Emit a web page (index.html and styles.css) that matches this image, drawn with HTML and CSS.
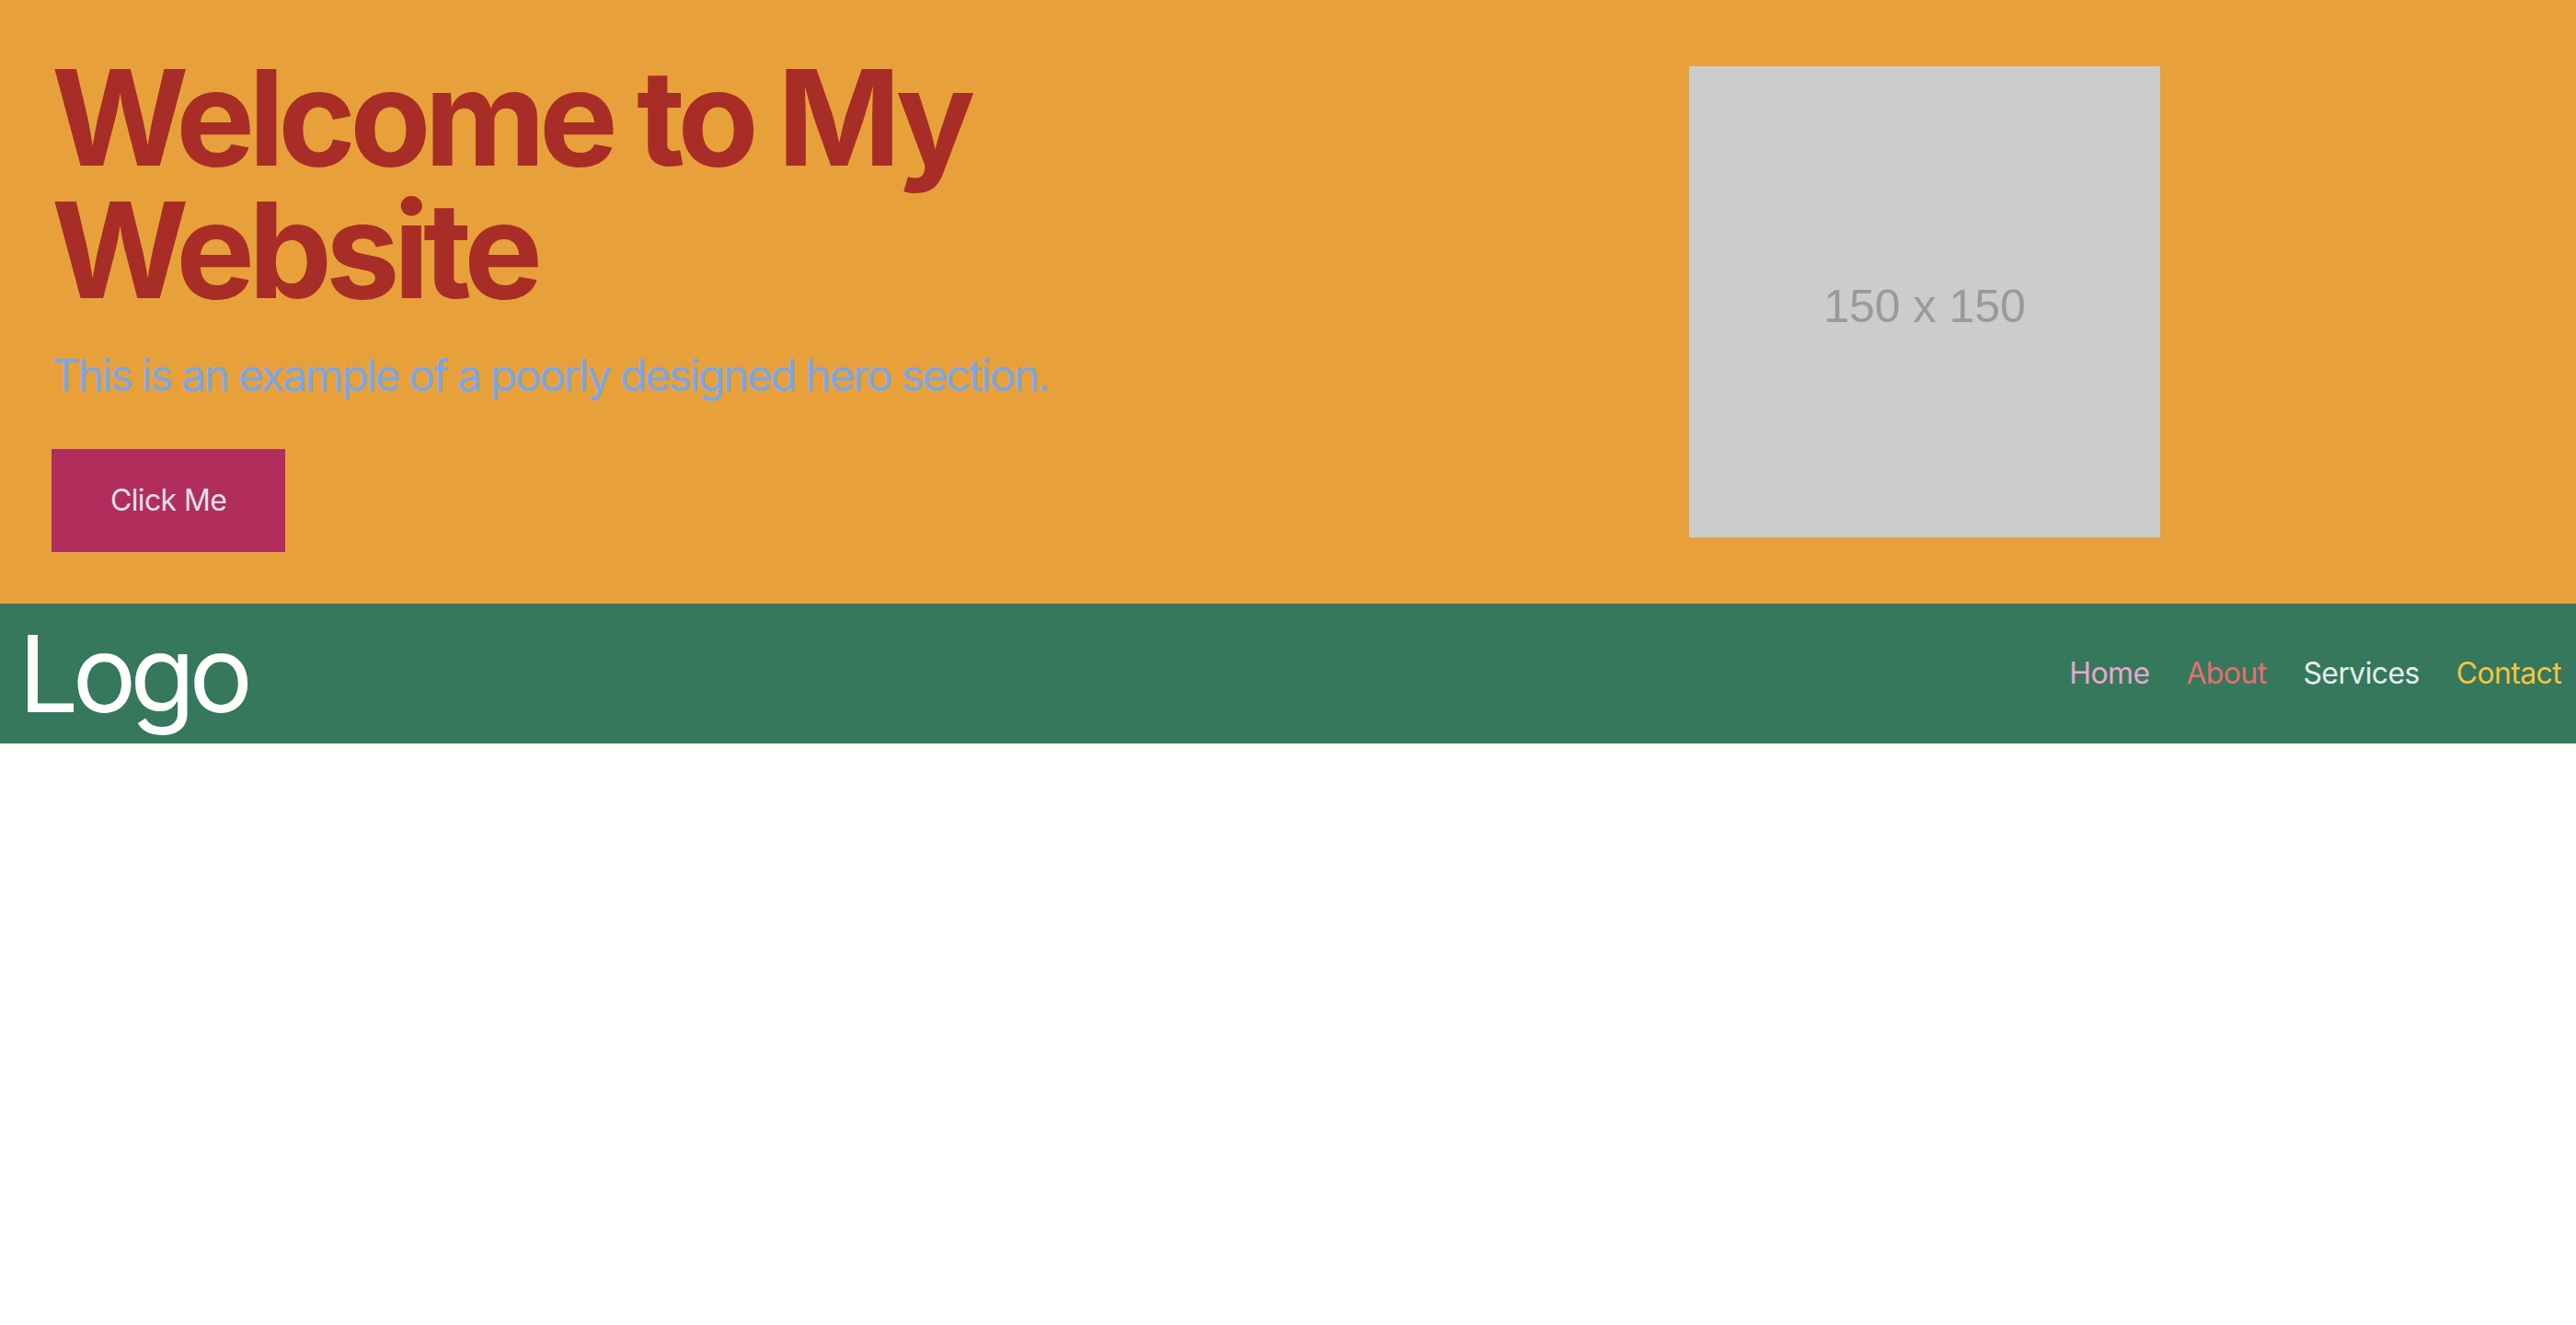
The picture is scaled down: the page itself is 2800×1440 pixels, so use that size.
FILE: index.html
```html
<!DOCTYPE html>
<html lang="en">
<head>
<meta charset="utf-8">
<title>Welcome to My Website</title>
<link rel="stylesheet" href="styles.css">
</head>
<body>
<section class="hero">
  <div class="hero-text">
    <h1 class="hero-title">Welcome to My<br>Website</h1>
    <p class="hero-sub">This is an example of a poorly designed hero section.</p>
    <button class="hero-btn">Click Me</button>
  </div>
  <div class="hero-media">
    <div class="placeholder"><span>150 x 150</span></div>
  </div>
</section>
<nav class="nav">
  <div class="logo">Logo</div>
  <ul class="links">
    <li><a class="link home" href="#">Home</a></li>
    <li><a class="link about" href="#">About</a></li>
    <li><a class="link services" href="#">Services</a></li>
    <li><a class="link contact" href="#">Contact</a></li>
  </ul>
</nav>
</body>
</html>
```

FILE: styles.css
```css
* { box-sizing: border-box; }
html, body { margin: 0; padding: 0; background: #ffffff; }
body { font-family: Inter, "Noto Sans", sans-serif; }

.hero {
  background: #e8a13a;
  padding: 56px;
  display: grid;
  grid-template-columns: 1fr 1fr;
  column-gap: 80px;
  align-items: center;
}
.hero-title {
  margin: 0 0 32px 0;
  font-size: 144px;
  line-height: 1;
  font-weight: 700;
  letter-spacing: -0.048em;
  color: #a82d26;
}
.hero-sub {
  margin: 0 0 48px 0;
  font-size: 48px;
  line-height: 64px;
  letter-spacing: -0.05em;
  color: #7aa6e6;
}
.hero-btn {
  display: block;
  border: 0;
  margin: 0;
  background: #b02d5c;
  color: #e0e0e6;
  font-family: Inter, "Noto Sans", sans-serif;
  font-size: 32px;
  line-height: 48px;
  letter-spacing: -0.02em;
  padding: 32px 64px;
}
.hero-media {
  display: flex;
  justify-content: center;
}
.placeholder {
  width: 512px;
  height: 512px;
  background: #cccccc;
  display: flex;
  align-items: center;
  justify-content: center;
  padding-top: 10px;
}
.placeholder span {
  font-family: "Liberation Sans", Arial, sans-serif;
  font-size: 50px;
  color: #9a9a9a;
}

.nav {
  background: #35785b;
  padding: 16px 16px 16px 20px;
  display: flex;
  align-items: center;
  justify-content: space-between;
}
.logo {
  font-size: 116px;
  line-height: 120px;
  letter-spacing: -0.06em;
  color: #ffffff;
}
.links {
  list-style: none;
  margin: 0;
  padding: 0;
  display: flex;
  gap: 40px;
}
.link {
  font-size: 32px;
  line-height: 48px;
  letter-spacing: -0.02em;
  text-decoration: none;
}
.home { color: #eaa6cf; }
.about { color: #e56f6f; }
.services { color: #e6eef0; }
.contact { color: #f4c542; }
```
